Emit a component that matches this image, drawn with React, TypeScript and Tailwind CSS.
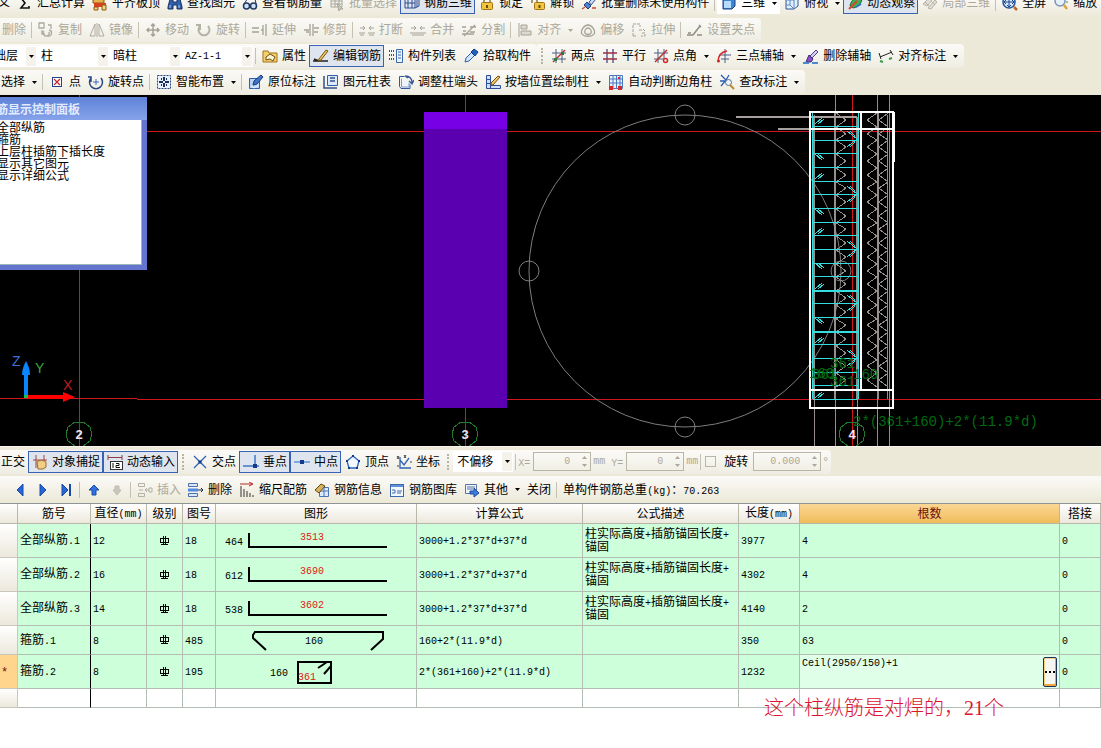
import { Fragment, type ReactNode } from "react";

// 16x16 toolbar glyphs
const icons: Record<string, ReactNode> = {
  sum: <path d="M12 5V3H4l4 5-4 5h8v-2" fill="none" stroke="#111" strokeWidth="1.6" />,
  slab: (
    <>
      <path d="M1 5l5-3 6 3v3H1z" fill="#e8b24a" stroke="#8a5a10" />
      <path d="M2 8h12v4H2z" fill="#d9401e" />
      <path d="M2 12h4v3H2zM10 10h4v5h-4z" fill="#f4d27a" stroke="#8a5a10" />
    </>
  ),
  find: (
    <>
      <path d="M3 4h3v3h4V4h3l2 8v2h-5v-4H6v4H1v-2z" fill="#2f5fae" stroke="#16305f" />
      <path d="M3 10v3M12 10v3" stroke="#a9c8f5" />
    </>
  ),
  glasses: (
    <>
      <circle cx="4.500" cy="11" r="3" fill="#cfe0f5" stroke="#223a63" strokeWidth="1.500" />
      <circle cx="11.500" cy="11" r="3" fill="#cfe0f5" stroke="#223a63" strokeWidth="1.500" />
      <path d="M2 9l4-6M14 9l-1-6M7 10h2" stroke="#223a63" fill="none" />
    </>
  ),
  batch: (
    <>
      <path d="M2 3h11v9H2zM2 6h11M2 9h11M6 3v9M10 3v9" fill="none" stroke="#aaa79b" />
      <path d="M8 8l6 6-3 0-1 2z" fill="#c9c6bb" stroke="#aaa79b" />
    </>
  ),
  grid3d: (
    <path d="M1 4h10v9H1zM1 8h10M4 4v9M8 4v9M11 4l4-2v9l-4 2M1 4l4-2h10M13 3v9" fill="none" stroke="#2c4c8c" />
  ),
  lock: (
    <>
      <path d="M5 8V5a3 3 0 016 0v3" fill="none" stroke="#8c7a3a" strokeWidth="1.500" />
      <rect x="2.500" y="7.500" width="11" height="7" rx="1" fill="#f2c63c" stroke="#a3741a" />
      <path d="M8 10v3" stroke="#6b4a0d" strokeWidth="2" />
    </>
  ),
  unlock: (
    <>
      <path d="M2 8V5a3 3 0 015 0v3" fill="none" stroke="#8c7a3a" strokeWidth="1.500" />
      <rect x="4.500" y="7.500" width="10" height="7" rx="1" fill="#f2c63c" stroke="#a3741a" />
      <path d="M9.500 10v3" stroke="#6b4a0d" strokeWidth="2" />
    </>
  ),
  brush: (
    <>
      <path d="M7 8l6-6 2 2-6 6z" fill="#d7c8ef" stroke="#51468a" />
      <path d="M6 7l4 4-2 3-5 0z" fill="#8e4fc0" stroke="#3c2a74" />
      <path d="M0 15h6M9 15h6" stroke="#4c8ad0" strokeWidth="2" />
    </>
  ),
  eraser: (
    <>
      <path d="M8 7l5-5 2 2-5 6z" fill="#c8dcf8" stroke="#33568e" />
      <path d="M6 7l4 4-3 3-4-4z" fill="#4f83cf" stroke="#1f3f7a" />
      <path d="M1 14l3-2M11 13h4" stroke="#d04a2a" strokeWidth="1.500" />
    </>
  ),
  cube: (
    <>
      <path d="M2 5l3-3h9v9l-3 3H2z" fill="#3c86d8" stroke="#1a3f78" />
      <path d="M3 6h7v7H3z" fill="#b5dcff" />
    </>
  ),
  cubeTop: (
    <>
      <path d="M2 5l4-3h8v9l-4 3H2z" fill="#e4effc" stroke="#2d5596" />
      <path d="M2 5h8v9M10 5l4-3M6 2v8H2M6 10l4 4" fill="none" stroke="#5b86c4" />
    </>
  ),
  orbit: (
    <>
      <path d="M3 11C4 5 8 2 15 2c0 6-3 10-9 11z" fill="#3fae55" stroke="#1e6c34" />
      <path d="M2 14l8-8" stroke="#d8452a" strokeWidth="2" />
      <path d="M9 12l5-3" stroke="#3a6cc6" strokeWidth="2" />
    </>
  ),
  partial: (
    <path d="M1 9l6-6 4 1-6 7zM6 13l7-8 2 2-6 7zM3 7l4 4M9 6l4 4" fill="#e0ddd2" stroke="#b7b4a8" />
  ),
  fullscreen: (
    <>
      <circle cx="7" cy="7" r="6" fill="#d8e9fb" stroke="#27529c" strokeWidth="1.500" />
      <path d="M7 2v10M2 7h10M5 4l2-2 2 2M5 10l2 2 2-2M4 5L2 7l2 2M10 5l2 2-2 2" fill="none" stroke="#1e448a" />
      <path d="M12 12l3 3" stroke="#b7682a" strokeWidth="2.500" />
    </>
  ),
  zoom: (
    <>
      <circle cx="7" cy="6" r="5" fill="#e6f1fc" stroke="#7a96b8" strokeWidth="1.500" />
      <path d="M11 10l3 4" stroke="#e0a23a" strokeWidth="2.500" />
      <path d="M12 3h3M13 7h2" stroke="#4f8a3a" />
    </>
  ),
  copy: (
    <path d="M1 1h5v5H1zM10 3h3v4M6 9a3 3 0 105 1M11 8a3 3 0 11-1 6M4 8v4h3" fill="none" stroke="#aeaba0" strokeWidth="1.300" />
  ),
  mirror: <path d="M6 2v12H1zM10 2v12h5zM8 1v14" fill="none" stroke="#aeaba0" />,
  move: (
    <path d="M8 2v12M2 8h12M6 4l2-2 2 2M6 12l2 2 2-2M4 6L2 8l2 2M12 6l2 2-2 2" fill="none" stroke="#a5a297" strokeWidth="1.500" />
  ),
  rotate: <path d="M4 4a5.500 5.500 0 108 0M4 8V3H0" fill="none" stroke="#b5b2a7" strokeWidth="2" />,
  extend: <path d="M0 6h7M0 10h7M9 8h2M14 2v12M11 3v10" fill="none" stroke="#a5a297" strokeWidth="1.300" />,
  trim: <path d="M1 8h5M7 2v12M10 2v12M11 6h5M11 10h4M3 10h3" fill="none" stroke="#a5a297" strokeWidth="1.300" />,
  breakLine: (
    <path d="M0 11h6M9 11h7M1 6h5M10 6h5M4 4l2 2-2 2M12 4l-2 2 2 2M1 13h4M10 13h5" fill="none" stroke="#a5a297" />
  ),
  merge: <path d="M0 11h16M1 6h5M10 6h5M4 4l2 2-2 2M12 4l-2 2 2 2M2 13h12" fill="none" stroke="#a5a297" />,
  split: <path d="M1 5h4M9 5h6M1 12h12M3 14L14 3M2 9h3M9 10h5" fill="none" stroke="#a5a297" strokeWidth="1.300" />,
  align: <path d="M2 1v14M4 3h6v4H4zM4 9h10v4H4z" fill="#dcd9ce" stroke="#a5a297" />,
  offset: (
    <path d="M2 12c-2-3 2-9 6-9s8 6 6 9-10 3-12 0zM5 11c-1-2 1-5 3-5s4 3 3 5-5 2-6 0z" fill="none" stroke="#a5a297" strokeWidth="1.300" />
  ),
  stretch: <path d="M2 14V2h7v3M2 14h4M8 8h3M11 11h3v3h-4M12 7l2 2" fill="none" stroke="#a5a297" strokeDasharray="3 1" />,
  grip: <path d="M0 13h6M6 13l7-9M12 3l2 2M10 13h5M1 11h3" fill="none" stroke="#8f8c82" strokeWidth="1.500" />,
  property: (
    <>
      <path d="M1 3h5l1 2h8v9H1z" fill="#f5cf6c" stroke="#a27418" />
      <path d="M4 9l4-3 5 3-2 4-3-2-4 1z" fill="#fff3cf" stroke="#68521a" />
    </>
  ),
  editBar: (
    <>
      <path d="M0 13h15M1 11l5 2" stroke="#222" strokeWidth="1.500" />
      <path d="M6 11l7-9 2 1-7 9-3 1z" fill="#f1c95c" stroke="#75531a" />
    </>
  ),
  list: (
    <>
      <path d="M1 3h3M1 7h3M1 11h3M5 3h2M5 7h2M5 11h2" stroke="#2f5597" strokeDasharray="1 1" strokeWidth="2" />
      <path d="M8.500 1.500h6v13h-6z" fill="#eaf3ff" stroke="#3a68b0" />
      <path d="M10 4h3M10 7h3M10 10h3" stroke="#3a68b0" />
    </>
  ),
  dropper: (
    <>
      <path d="M2 14l1-4 6-6 3 3-6 6z" fill="#cfe5ff" stroke="#2e62ae" />
      <path d="M8 4l3-3 4 3-3 4z" fill="#2161c4" stroke="#123a7c" />
    </>
  ),
  twoPoint: (
    <>
      <path d="M1 5h14M1 11h14M5 1v14M11 1v14" stroke="#4a5c86" />
      <path d="M2 14L14 2" stroke="#c22a2a" strokeWidth="1.500" />
      <path d="M3 10h3v3H3zM10 4h3v3h-3z" fill="#2f7a3a" />
    </>
  ),
  parallel: (
    <>
      <path d="M5 1v14M11 1v14" stroke="#4a4c86" strokeWidth="1.300" />
      <path d="M1 5h14M1 11h14" stroke="#a02c44" strokeWidth="1.300" />
    </>
  ),
  pointAngle: (
    <>
      <path d="M1 5h14M1 11h10M5 1v14M11 1v9" stroke="#4a5c86" />
      <path d="M2 14L14 2" stroke="#c22a2a" strokeWidth="1.500" />
      <circle cx="12.500" cy="12.500" r="2" fill="none" stroke="#d6262a" strokeWidth="1.500" />
    </>
  ),
  threePoint: (
    <>
      <path d="M3 7h12M9 1v14M5 11h8" stroke="#4a5c86" />
      <path d="M2 14c0-6 3-10 9-11" fill="none" stroke="#d6262a" strokeWidth="1.500" />
      <circle cx="2.500" cy="13" r="1.500" fill="#d6262a" />
    </>
  ),
  dimension: (
    <>
      <path d="M2 9L14 4M1 5l2 6M12 2l3 5" stroke="#222" />
      <path d="M2 13l3 1M11 11l3-1" stroke="#3a9a4a" strokeWidth="2" />
    </>
  ),
  point: (
    <>
      <rect x="3.500" y="3.500" width="9" height="9" fill="#fff" stroke="#24448c" />
      <path d="M5 5l6 6M11 5l-6 6" stroke="#c62828" strokeWidth="1.300" />
    </>
  ),
  rotatePoint: (
    <>
      <path d="M3 4a6.500 6.500 0 1010 0M3 8V3H0" fill="none" stroke="#2b4684" strokeWidth="1.500" />
      <path d="M8 5v6M5 8h6" stroke="#3c6ac0" />
    </>
  ),
  smart: (
    <>
      <rect x="1.500" y="1.500" width="13" height="13" fill="#e8f2ff" stroke="#27427c" strokeDasharray="2 1" />
      <path d="M8 3v4M8 9v4M3 8h4M9 8h4M5 5h1M10 5h1M5 11h1M10 11h1" stroke="#1c2f5c" strokeWidth="2" />
    </>
  ),
  origin: (
    <>
      <path d="M1.500 4.500h10v10h-10z" fill="#b8d4f6" stroke="#2e5fa8" />
      <path d="M5 11l1-4 7-6 2 2-6 7z" fill="#3f76ca" stroke="#173a7a" />
      <path d="M3 12l3 2 5-3" fill="none" stroke="#e8f3ff" />
    </>
  ),
  columnTable: (
    <>
      <path d="M4.500 1.500h10v10h-10z" fill="#dceafb" stroke="#2e5fa8" />
      <path d="M7 4h5M7 7h5M1 2v12h13" fill="none" stroke="#35518a" strokeWidth="1.500" />
    </>
  ),
  adjust: (
    <>
      <path d="M3 14.500h9v-4M3 14.500l-1.500-2V2.500h5" fill="none" stroke="#35579a" />
      <path d="M3.500 4.500V13H11V9" fill="#eef5ff" stroke="#7f9cc8" />
      <path d="M7 2c5 0 7 2 7 7M11 7l3 3 2-4M7 2l3 2" fill="none" stroke="#35579a" strokeWidth="1.300" />
    </>
  ),
  wallDraw: (
    <>
      <path d="M1.500 1.500h4v4h-4zM1.500 5.500h4v4h-4zM1.500 9.500h4v5h-4zM5.500 11.500h10v3h-10z" fill="#cfe0f8" stroke="#2a4f98" />
      <path d="M6 9l7-7 2 1-7 8-2 0z" fill="#f0cb60" stroke="#6a4c20" />
    </>
  ),
  autoCorner: (
    <>
      <path d="M1.500 1.500h13v13h-13zM5 1v13M8.500 1v13M12 1v13M1 5h13M1 9h13" fill="#e6f1ff" stroke="#4c78bd" />
      <path d="M1 12h4v4H1zM10 12h4v4h-4zM10 3h2v2h-2z" fill="#d8262a" />
    </>
  ),
  checkMark: (
    <>
      <path d="M2 1l5 5-5 6M1 7h7M10 1l-3 5" fill="none" stroke="#2b5db0" strokeWidth="1.300" />
      <circle cx="9.500" cy="8.500" r="3" fill="#eaf5ff" stroke="#56718f" />
      <path d="M11 11l4 4" stroke="#bd8a2c" strokeWidth="2" />
    </>
  ),
  snap: (
    <>
      <path d="M1 6h14M4 1v13M12 1v6" stroke="#a3423a" />
      <path d="M5 8c2-2 7-2 9 0v5l-3 2H6z" fill="#f2cd85" stroke="#9a6c26" />
    </>
  ),
  dynInput: (
    <>
      <path d="M1 1v5M1 3.500h14M15 1v5" fill="none" stroke="#8c3c3c" />
      <rect x="3.500" y="7.500" width="12" height="8" fill="#fff" stroke="#333" />
      <path d="M6 9v5M9 9.500h3v2H9v2h4" fill="none" stroke="#111" />
    </>
  ),
  cross: (
    <>
      <path d="M2 2l12 12M14 2L2 14" stroke="#2f62b8" strokeWidth="1.300" />
      <path d="M6.500 6.500h3v3h-3z" fill="#123a86" />
    </>
  ),
  perp: (
    <>
      <path d="M0 12h16M12 1v11" stroke="#3d77c9" strokeWidth="1.500" />
      <path d="M10 10h4v4h-4z" fill="#123a86" />
    </>
  ),
  middle: (
    <>
      <path d="M0 8h16" stroke="#5b95dd" strokeWidth="1.500" />
      <path d="M6 6h4v4H6z" fill="#123a86" />
    </>
  ),
  vertex: (
    <>
      <path d="M8 2l6 5-2 7H4L2 7z" fill="#f4f9ff" stroke="#2f62b8" strokeWidth="1.300" />
      <path d="M7 1h2v2H7zM1 6h2v2H1zM13 6h2v2h-2zM3 13h2v2H3zM11 13h2v2h-2z" fill="#123a86" />
    </>
  ),
  coord: (
    <>
      <path d="M4 3v11h11M4 6l4 5 5-7" fill="none" stroke="#2f62b8" strokeWidth="1.300" />
      <path d="M1 2l2 3M3 2L1 5M8 1l2 3M10 1L8 4M1 12h2M14 8h2" stroke="#444" />
    </>
  ),
  prev: <path d="M11 2v12L5 8z" fill="#2667d8" stroke="#1a4aa6" />,
  next: <path d="M5 2v12l6-6z" fill="#2667d8" stroke="#1a4aa6" />,
  last: (
    <>
      <path d="M4 2v12l6-6z" fill="#2667d8" stroke="#1a4aa6" />
      <path d="M12 2v12" stroke="#1a4aa6" strokeWidth="2" />
    </>
  ),
  up: <path d="M8 3l5 5h-3v5H6V8H3z" fill="#2f72e0" stroke="#1a4aa6" />,
  down: <path d="M8 13l4-5h-2V4H6v4H4z" fill="#c9c7bd" stroke="#bdbab0" />,
  insert: <path d="M1.500 1.500h6v3h-6zM1.500 11.500h6v3h-6zM2 8h4M8 8h4M8 8l2-2M8 8l2 2M12 6h3v4h-3z" fill="none" stroke="#b3b0a5" />,
  remove: (
    <>
      <path d="M.5 1.500h9v3h-9zM.5 11.500h9v3h-9z" fill="#dbe8fa" stroke="#4a70b0" />
      <path d="M0 8h10" stroke="#4f8be0" strokeWidth="3" />
      <path d="M10 8h5M13 6l2 2-2 2" fill="none" stroke="#1c2c50" />
    </>
  ),
  scale: (
    <>
      <path d="M1 2h12M10 0l4 2-4 2" fill="none" stroke="#b22a2a" />
      <path d="M2 4v11M5 7v8M8 9v6M11 11v4M14 13v2" stroke="#333" />
    </>
  ),
  info: (
    <>
      <path d="M5.500 5.500h9v9h-9zM5 9h9M10 5v9" fill="#dceafc" stroke="#4a72b6" />
      <path d="M1 8l6-6 4 2-6 7z" fill="#d9b25e" stroke="#5f4a1c" />
    </>
  ),
  library: (
    <>
      <rect x="1.500" y="2.500" width="13" height="12" fill="#f3f8ff" stroke="#3c68ae" />
      <path d="M2 4h12" stroke="#5e90dc" strokeWidth="2" />
      <path d="M3 8h3v3H3M8 9h5M8 11h4" fill="none" stroke="#3c68ae" />
    </>
  ),
  other: (
    <>
      <path d="M1.500 2.500h11v9h-11zM3 5h8M3 7h6" fill="#eef4fd" stroke="#5875a6" />
      <path d="M6 9h4V6l5 5-5 4v-3H6z" fill="#3d7be0" stroke="#1d4a9e" />
    </>
  ),
};

function Icon({ name }: { name: string }) {
  return (
    <svg viewBox="0 0 16 16" className="size-4 shrink-0" aria-hidden="true">
      {icons[name]}
    </svg>
  );
}

// Latin runs are half as wide as a Chinese character
function Label({ children }: { children: string }) {
  return (
    <>
      {children.split(/([ -~]+)/).map((part, i) =>
        i % 2 ? (
          <span key={i} className="font-['Liberation_Mono',monospace] text-[10px] leading-none">
            {part}
          </span>
        ) : (
          <Fragment key={i}>{part}</Fragment>
        ),
      )}
    </>
  );
}

function Caret() {
  return (
    <svg viewBox="0 0 5 3" className="h-[3px] w-[5px] shrink-0" aria-hidden="true">
      <path d="M0 0h5L2.500 3z" fill="currentColor" />
    </svg>
  );
}

type ToolProps = { icon?: string; label?: string; name?: string; on?: boolean; off?: boolean; menu?: boolean };

function Tool({ icon, label, name, on, off, menu }: ToolProps) {
  return (
    <button
      type="button"
      disabled={off}
      aria-label={name}
      aria-pressed={on}
      className={`flex h-[22px] shrink-0 items-center gap-1 border pl-[3px] pr-[2px] whitespace-nowrap ${
        on ? "border-[#3a62b4] bg-[#dfe5ee]" : "border-transparent"
      } ${off ? "text-[#aca899]" : "text-black"}`}
    >
      {icon && <Icon name={icon} />}
      {label}
      {menu && (
        <span className="pl-[3px]">
          <Caret />
        </span>
      )}
    </button>
  );
}

function Sep() {
  return <div className="mx-[2px] h-4 w-px shrink-0 bg-[#c5c2b4]" />;
}

function Grip() {
  return <div className="mx-1 h-4 shrink-0 border-l-2 border-dotted border-[#b8b5a6]" />;
}

function Strip({ children }: { children: ReactNode }) {
  return (
    <div className="flex h-6 items-center rounded-r-sm bg-linear-to-b from-[#fbfaf7] to-[#efede2] pr-[3px]">
      {children}
    </div>
  );
}

function Combo({ value, label, width }: { value: string; label: string; width: string }) {
  const latin = /^[ -~]+$/.test(value);
  return (
    <div className={`relative h-[21px] shrink-0 bg-white ${width}`}>
      <select
        aria-label={label}
        defaultValue={value}
        className={`h-full w-full appearance-none bg-transparent pl-1 ${
          latin ? "font-['Liberation_Mono',monospace] text-[10px]" : ""
        }`}
      >
        <option>{value}</option>
      </select>
      <span className="pointer-events-none absolute inset-y-px right-px flex w-[10px] items-center justify-center bg-[#f4f2ea]">
        <Caret />
      </span>
    </div>
  );
}

function Spin({ label, value, unit, width }: { label: string; value: string; unit: string; width: string }) {
  return (
    <label className="flex items-center gap-[2px] text-[#aca899]">
      {label && (
        <span className="mr-px">
          <Label>{label}</Label>
        </span>
      )}
      <span className={`flex h-[19px] items-center border border-[#b9b6a6] pr-[3px] ${width}`}>
        <input
          disabled
          defaultValue={value}
          aria-label={label || "旋转角度"}
          className="w-full min-w-0 bg-transparent pr-3 text-right font-['Liberation_Mono',monospace] text-[10px]"
        />
        <span className="flex flex-col gap-[5px]">
          <span className="rotate-180">
            <Caret />
          </span>
          <Caret />
        </span>
      </span>
      <Label>{unit}</Label>
    </label>
  );
}

const stirrups = Array.from({ length: 21 }, (_, i) => Math.round(31 + i * 13.65));
const zigzag = (x: number, tip: number) =>
  "M" + Array.from({ length: 41 }, (_, i) => `${i % 2 ? tip : x} ${Math.round(18 + i * 6.85)}`).join("L");
const hooksUp = [26, 81, 136, 191, 245, 300];
const hooksDown = [62, 117, 171, 226];
const hooksRight = [44, 99, 154, 208, 263];

function AxisBubble({ x, children }: { x: number; children: string }) {
  return (
    <>
      <path
        d={`M${x - 4} 327h8l7 5 2 7-2 7-7 5h-8l-7-5-2-7 2-7z`}
        fill="none"
        stroke="#1f7a2c"
        shapeRendering="crispEdges"
      />
      <text x={x} y="344" textAnchor="middle" fontSize="13" fontWeight="bold" fill="#f0e4f0">
        {children}
      </text>
    </>
  );
}

function Drawing() {
  return (
    <svg
      viewBox="0 0 1101 351"
      preserveAspectRatio="xMinYMin slice"
      className="block h-[351px] w-full bg-black font-['Liberation_Sans',sans-serif]"
    >
      <g fill="#d0161e">
        <path d="M79 0h1v351h-1zM465 0h1v351h-1zM852 0h1v351h-1z" />
        <path d="M0 36h1101v1H0zM0 303h137v1H0zM137 304h964v1H137z" />
      </g>
      <rect x="424" y="17" width="83" height="296" fill="#5a00b0" />
      <rect x="424" y="17" width="83" height="17" fill="#7800e4" />
      <g fill="none" stroke="#7d7d7d">
        <circle cx="685" cy="176" r="156" />
        <circle cx="685" cy="20" r="10" />
        <circle cx="529" cy="176" r="10" />
        <circle cx="685" cy="332" r="10" />
        <circle cx="841" cy="176" r="10" />
      </g>
      <g fill="none" stroke="#958e8c" shapeRendering="crispEdges">
        <path d="M835.500 0V351M877.500 0V351M889.500 0V351M887.500 20V304M814 20V351M857 22V351" />
        <path d="M814 22V304M835 17V304M857 22V304M878 17V304" strokeWidth="2" />
        <path d="M736 22H857M778 34H812" stroke="#a8a09e" strokeWidth="2" />
        <path d={zigzag(836, 846)} />
        <path d={zigzag(877, 867)} />
        <path d={zigzag(888, 879)} />
      </g>
      <g fill="none" stroke="#35dede" shapeRendering="crispEdges">
        <path d="M812.500 17V304M858.500 17V304M813 17.500H859" />
        {stirrups.map((y, i) => (
          <path key={y} d={`M813 ${y}.5H858`} strokeWidth={i === 12 || i === 15 ? 2 : 1} />
        ))}
        {hooksUp.map((y) => (
          <path key={y} d={`M815 ${y + 3}l7-6M818 ${y + 3}l6-5`} />
        ))}
        {hooksDown.map((y) => (
          <path key={y} d={`M815 ${y - 3}l7 6M818 ${y - 3}l6 5`} />
        ))}
        {hooksRight.map((y) => (
          <path key={y} d={`M847 ${y - 8}l10 8l-10 8M850 ${y - 8}l5 5M850 ${y + 8}l5-5`} />
        ))}
      </g>
      <g fill="none" stroke="#fff" strokeWidth="2" shapeRendering="crispEdges">
        <path d="M810 17H893V313H810ZM861 17V295M810 34H893M810 295H893M894 17V67" />
      </g>
      <g fill="#006c10" fontSize="14" className="font-['Liberation_Mono',monospace]">
        <text x="853" y="331">2*(361+160)+2*(11.9*d)</text>
        <text x="853" y="284">160</text>
        <text x="830" y="273">361</text>
        <text x="830" y="291">361</text>
        <text x="809" y="283">160</text>
        <text x="812" y="284">361</text>
      </g>
      <AxisBubble x={79}>2</AxisBubble>
      <AxisBubble x={465}>3</AxisBubble>
      <AxisBubble x={852}>4</AxisBubble>
      <path d="M24 302V280h-2c0-6 2-10 4-14 2 4 4 8 4 14h-2V302z" fill="#0a84ff" />
      <path d="M28 300H63v-3l12 5-12 5v-3H28z" fill="#f00" />
      <path d="M24 300h4v3h-4z" fill="#19c24a" />
      <g fontSize="14">
        <text x="12" y="271" fill="#3f6fd8">
          Z
        </text>
        <text x="35" y="278" fill="#3aa83a">
          Y
        </text>
        <text x="63" y="295" fill="#c01a22">
          X
        </text>
      </g>
    </svg>
  );
}

const panelItems = ["全部纵筋", "箍筋", "上层柱插筋下插长度", "显示其它图元", "显示详细公式"];

function DisplayPanel() {
  return (
    <section className="absolute top-[2px] left-0 w-[147px] overflow-hidden bg-[#6475cf] pr-[5px] pb-[5px] text-black">
      <h2 className="-mr-[5px] -ml-1 h-[23px] bg-linear-to-b from-[#5f83d8] to-[#86a2ea] text-[12px] leading-[26px] font-bold whitespace-nowrap text-[#e3ecff]">
        筋显示控制面板
      </h2>
      <ul className="h-[145px] border-r border-b border-[#9db4b8] bg-white pt-[2px] leading-[12px] whitespace-nowrap">
        {panelItems.map((item) => (
          <li key={item} className="-ml-[3px]">
            {item}
          </li>
        ))}
      </ul>
    </section>
  );
}

type Bar = {
  name: string;
  dia: string;
  fig: string;
  shape: ReactNode;
  formula: string;
  note?: string;
  length: string;
  count: string;
  edit?: boolean;
};

function Straight({ side, total }: { side: string; total: string }) {
  return (
    <>
      <text x="9" y="21">{side}</text>
      <text x="84" y="16" fill="#e01818">{total}</text>
      <path d="M33 9v14h138" fill="none" stroke="#000" strokeWidth="2" />
    </>
  );
}

// zero-width space lets the line break after the last plus sign
const note = "柱实际高度+插筋锚固长度+\u200b锚固";
const bars: Bar[] = [
  { name: "全部纵筋.1", dia: "12", fig: "18", shape: <Straight side="464" total="3513" />, formula: "3000+1.2*37*d+37*d", note, length: "3977", count: "4" },
  { name: "全部纵筋.2", dia: "16", fig: "18", shape: <Straight side="612" total="3690" />, formula: "3000+1.2*37*d+37*d", note, length: "4302", count: "4" },
  { name: "全部纵筋.3", dia: "14", fig: "18", shape: <Straight side="538" total="3602" />, formula: "3000+1.2*37*d+37*d", note, length: "4140", count: "2" },
  {
    name: "箍筋.1",
    dia: "8",
    fig: "485",
    shape: (
      <>
        <path d="M50 24L37 12V9l2-3H167v7l-12 11" fill="none" stroke="#000" strokeWidth="2" />
        <text x="89" y="18">160</text>
      </>
    ),
    formula: "160+2*(11.9*d)",
    length: "350",
    count: "63",
  },
  {
    name: "箍筋.2",
    dia: "8",
    fig: "195",
    shape: (
      <>
        <path d="M82 7h33v21H82zM102 13l9-6M108 19l7-8" fill="none" stroke="#000" strokeWidth="2" />
        <text x="54" y="21">160</text>
        <text x="82" y="25" fill="#e01818">361</text>
      </>
    ),
    formula: "2*(361+160)+2*(11.9*d)",
    length: "1232",
    count: "Ceil(2950/150)+1",
    edit: true,
  },
];

const columns = [
  { title: "", width: "w-[18px]" },
  { title: "筋号", width: "w-[73px]" },
  { title: "直径(mm)", width: "w-[56px]" },
  { title: "级别", width: "w-[36px]" },
  { title: "图号", width: "w-[33px]" },
  { title: "图形", width: "w-[201px]" },
  { title: "计算公式", width: "w-[166px]" },
  { title: "公式描述", width: "w-[156px]" },
  { title: "长度(mm)", width: "w-[61px]" },
  { title: "根数", width: "w-auto" },
  { title: "搭接", width: "w-[41px]" },
];

const cell = "border-r border-b border-[#b4bdb4] px-[2px] py-0";
const rowHead = "border-r border-b border-[#c9c6ba] p-0 font-normal";

function BarTable() {
  return (
    <table className="w-full table-fixed border-separate border-spacing-0 border-t border-[#8f9496] leading-[12px]">
      <thead>
        <tr className="h-5">
          {columns.map(({ title, width }) => (
            <th
              key={title || "mark"}
              scope="col"
              className={`border-r border-b border-[#b9b6aa] bg-linear-to-b p-0 font-normal whitespace-nowrap ${width} ${
                title === "根数" ? "from-[#fbd796] to-[#f0bc58] text-[#6b1010]" : "from-white to-[#ece8dc]"
              }`}
            >
              <Label>{title}</Label>
            </th>
          ))}
        </tr>
      </thead>
      <tbody>
        {bars.map((bar) => (
          <tr key={bar.name} className={`bg-[#ccffda] ${bar.fig === "485" ? "h-[29px]" : "h-[34px]"}`}>
            <th className={`${rowHead} ${bar.edit ? "bg-[#ffd48c] text-[#6b1010]" : "bg-linear-to-b from-white to-[#ece8dc]"}`}>
              {bar.edit && <span className="-ml-2 block">*</span>}
            </th>
            <td className="border-r border-b border-r-black border-b-[#b4bdb4] px-[2px] py-0">
              <Label>{bar.name}</Label>
            </td>
            <td className={cell}>
              <Label>{bar.dia}</Label>
            </td>
            <td className={cell}>
              <svg viewBox="0 0 9 10" className="mx-auto h-[10px] w-[9px]" role="img" aria-label="三级钢">
                <path d="M.5 2.500h8v4h-8zM3.500 0v9M5.500 0v9M1 8.500h7" fill="none" stroke="#000" shapeRendering="crispEdges" />
              </svg>
            </td>
            <td className={cell}>
              <Label>{bar.fig}</Label>
            </td>
            <td className="border-r border-b border-[#b4bdb4] p-0">
              <svg
                className={`block w-[200px] font-['Liberation_Mono',monospace] text-[10px] ${
                  bar.fig === "485" ? "h-[28px]" : "h-[33px]"
                }`}
              >
                {bar.shape}
              </svg>
            </td>
            <td className={cell}>
              <Label>{bar.formula}</Label>
            </td>
            <td className={cell}>{bar.note && <Label>{bar.note}</Label>}</td>
            <td className={cell}>
              <Label>{bar.length}</Label>
            </td>
            {bar.edit ? (
              <td className="border-r border-b border-[#b4bdb4] bg-[#e0ffe8] p-0">
                <div className="flex h-[33px] items-start justify-between px-[2px] pt-[2px]">
                  <input
                    aria-label="根数"
                    defaultValue={bar.count}
                    className="min-w-0 flex-1 bg-transparent font-['Liberation_Mono',monospace] text-[10px] leading-[14px]"
                  />
                  <button
                    type="button"
                    aria-label="编辑"
                    className="flex h-[30px] w-[14px] items-center justify-center gap-[2px] rounded-[2px] border border-[#1c3358] bg-[#f7f5ef] shadow-[inset_-1px_-2px_0_#f0a83c,inset_1px_1px_0_#fbd28a]"
                  >
                    <span className="size-[2px] bg-black" />
                    <span className="size-[2px] bg-black" />
                    <span className="size-[2px] bg-black" />
                  </button>
                </div>
              </td>
            ) : (
              <td className={cell}>
                <Label>{bar.count}</Label>
              </td>
            )}
            <td className={cell}>
              <Label>0</Label>
            </td>
          </tr>
        ))}
        <tr className="h-[19px]">
          <th className={`${rowHead} bg-linear-to-b from-white to-[#ece8dc]`} />
          <td className="border-r border-b border-r-black border-b-[#b4bdb4] p-0" />
          {columns.slice(2).map(({ title }) => (
            <td key={title} className={cell} />
          ))}
        </tr>
      </tbody>
    </table>
  );
}

export default function App() {
  return (
    <div className="min-h-screen overflow-hidden bg-white font-['Liberation_Sans','Noto_Sans_CJK_SC',sans-serif] text-[12px] text-black">
      <header className="bg-[#ece9d8]">
        <div className="flex h-[17px] items-end overflow-hidden bg-linear-to-b from-[#f8f7f2] to-[#ece9d8] pb-[3px]">
          <div className="-ml-[6px] flex items-center">
            <Tool label="义" />
            <Tool icon="sum" label="汇总计算" />
            <Tool icon="slab" label="平齐板顶" />
            <Tool icon="find" label="查找图元" />
            <Tool icon="glasses" label="查看钢筋量" />
            <Tool icon="batch" label="批量选择" off />
            <Tool icon="grid3d" label="钢筋三维" on />
            <Tool icon="lock" label="锁定" />
            <Tool icon="unlock" label="解锁" />
            <Tool icon="eraser" label="批量删除未使用构件" />
            <Sep />
            <div className="bg-white">
              <Tool icon="cube" label="三维" menu />
            </div>
            <Tool icon="cubeTop" label="俯视" menu />
            <Tool icon="orbit" label="动态观察" on />
            <Tool icon="partial" label="局部三维" off />
            <Sep />
            <Tool icon="fullscreen" label="全屏" />
            <Tool icon="zoom" label="缩放" />
          </div>
        </div>

        <div className="flex h-[26px] items-center">
          <Strip>
            <div className="-ml-[2px]">
              <Tool label="删除" off />
            </div>
            <Sep />
            <Tool icon="copy" label="复制" off />
            <Tool icon="mirror" label="镜像" off />
            <Sep />
            <Tool icon="move" label="移动" off />
            <Tool icon="rotate" label="旋转" off />
            <Sep />
            <Tool icon="extend" label="延伸" off />
            <Tool icon="trim" label="修剪" off />
            <Sep />
            <Tool icon="breakLine" label="打断" off />
            <Tool icon="merge" label="合并" off />
            <Tool icon="split" label="分割" off />
            <Sep />
            <Tool icon="align" label="对齐" off menu />
            <Tool icon="offset" label="偏移" off />
            <Tool icon="stretch" label="拉伸" off />
            <Sep />
            <Tool icon="grip" label="设置夹点" off />
          </Strip>
        </div>

        <div className="flex h-[26px] items-center">
          <Strip>
            <div className="-ml-[10px] flex">
              <Combo label="楼层" value="础层" width="w-[47px]" />
              <Combo label="构件类型" value="柱" width="w-[72px]" />
              <Combo label="构件类别" value="暗柱" width="w-[72px]" />
              <Combo label="构件" value="AZ-1-1" width="w-[72px]" />
            </div>
            <Sep />
            <Tool icon="property" label="属性" />
            <Tool icon="editBar" label="编辑钢筋" on />
            <Tool icon="list" label="构件列表" />
            <Tool icon="dropper" label="拾取构件" />
          </Strip>
          <Strip>
            <Grip />
            <Tool icon="twoPoint" label="两点" />
            <Tool icon="parallel" label="平行" />
            <Tool icon="pointAngle" label="点角" menu />
            <Tool icon="threePoint" label="三点辅轴" menu />
            <Tool icon="brush" label="删除辅轴" />
            <Tool icon="dimension" label="对齐标注" menu />
          </Strip>
        </div>

        <div className="flex h-[26px] items-center">
          <Strip>
            <div className="-ml-[3px]">
              <Tool label="选择" menu />
            </div>
            <Sep />
            <Tool icon="point" label="点" />
            <Tool icon="rotatePoint" label="旋转点" />
            <Sep />
            <Tool icon="smart" label="智能布置" menu />
            <Sep />
            <Tool icon="origin" label="原位标注" />
            <Tool icon="columnTable" label="图元柱表" />
            <Tool icon="adjust" label="调整柱端头" />
            <Tool icon="wallDraw" label="按墙位置绘制柱" menu />
            <Tool icon="autoCorner" label="自动判断边角柱" />
            <Tool icon="checkMark" label="查改标注" menu />
          </Strip>
        </div>
      </header>

      <main>
        <div className="relative">
          <Drawing />
          <DisplayPanel />
        </div>

        <div className="flex h-[30px] items-center border-t border-[#f8f6ee] bg-[#ece9d8]">
          <Strip>
            <div className="-ml-[3px]">
              <Tool label="正交" />
            </div>
            <Tool icon="snap" label="对象捕捉" on />
            <Tool icon="dynInput" label="动态输入" on />
            <Grip />
            <Tool icon="cross" label="交点" />
            <Tool icon="perp" label="垂点" on />
            <Tool icon="middle" label="中点" on />
            <Tool icon="vertex" label="顶点" />
            <Tool icon="coord" label="坐标" />
            <Grip />
            <Combo label="偏移方式" value="不偏移" width="w-[60px]" />
            <Sep />
            <div className="flex items-center gap-[6px]">
              <Spin label="X=" value="0" unit="mm" width="w-[58px]" />
              <Spin label="Y=" value="0" unit="mm" width="w-[58px]" />
            </div>
            <Sep />
            <label className="flex items-center gap-2 pr-[5px] pl-[2px]">
              <input type="checkbox" className="size-[11px] appearance-none border border-[#b9b6a6]" />
              旋转
            </label>
            <Spin label="" value="0.000" unit="°" width="w-[68px]" />
          </Strip>
        </div>

        <div className="flex h-[27px] items-center bg-linear-to-b from-[#fbfaf7] to-[#ece9d8] pl-2">
          <Tool icon="prev" name="上一条" />
          <Tool icon="next" name="下一条" />
          <Tool icon="last" name="最后一条" />
          <Sep />
          <Tool icon="up" name="上移" />
          <Tool icon="down" name="下移" off />
          <Sep />
          <Tool icon="insert" label="插入" off />
          <Tool icon="remove" label="删除" />
          <Tool icon="scale" label="缩尺配筋" />
          <Tool icon="info" label="钢筋信息" />
          <Tool icon="library" label="钢筋图库" />
          <Tool icon="other" label="其他" menu />
          <Tool label="关闭" />
          <Sep />
          <output className="pl-1 whitespace-nowrap">
            <Label>单构件钢筋总重(kg)：70.263</Label>
          </output>
        </div>

        <div className="relative">
          <BarTable />
          <p className="absolute -bottom-3 left-[764px] font-['Liberation_Serif','Noto_Sans_CJK_SC',serif] text-[20px] leading-6 font-light whitespace-nowrap text-[#dc1430]">
            这个柱纵筋是对焊的，21个
          </p>
        </div>
      </main>
    </div>
  );
}
